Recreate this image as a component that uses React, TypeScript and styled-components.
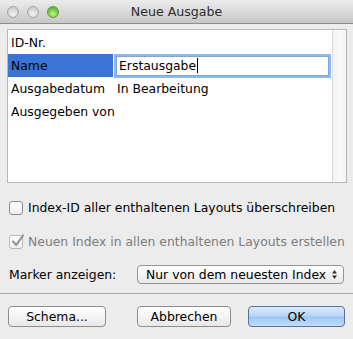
import React from "react";
import styled, { createGlobalStyle } from "styled-components";

const Global = createGlobalStyle`
  html, body { margin: 0; padding: 0; background: #ececec; }
  body { font-family: "DejaVu Sans", "Liberation Sans", sans-serif; font-size: 12.4px; color: #000; }
  * { box-sizing: border-box; }
`;

const Window = styled.div`
  width: 353px;
  height: 339px;
  background: #ececec;
  display: flex;
  flex-direction: column;
  overflow: hidden;
`;

const TitleBar = styled.div`
  height: 24px;
  flex: none;
  display: flex;
  align-items: center;
  position: relative;
  background: linear-gradient(#ebebeb, #d6d6d6 60%, #c6c6c6);
  border-bottom: 1px solid #8f8f8f;
`;

const Lights = styled.div`
  display: flex;
  gap: 8px;
  padding-left: 7px;
`;

const Light = styled.span<{ $green?: boolean }>`
  width: 12px;
  height: 12px;
  border-radius: 50%;
  border: 1px solid ${(p) => (p.$green ? "#5f9a3a" : "#a6a6a6")};
  background: ${(p) =>
    p.$green
      ? "radial-gradient(circle at 50% 70%, #c6f58a, #79c843 55%, #4c9a25)"
      : "radial-gradient(circle at 50% 70%, #f4f4f4, #d6d6d6 55%, #bcbcbc)"};
`;

const Title = styled.div`
  position: absolute;
  left: 0;
  right: 0;
  text-align: center;
  color: #2e2e2e;
  font-size: 12.6px;
  pointer-events: none;
`;

const Content = styled.div`
  flex: 1;
  display: flex;
  flex-direction: column;
  padding: 5px 6px 0 7px;
`;

const TableBox = styled.div`
  height: 154px;
  border: 1px solid #b8b8b8;
  background: #fff;
  display: flex;
`;

const Rows = styled.div`
  flex: 1;
  display: flex;
  flex-direction: column;
  padding-top: 1px;
`;

const Row = styled.div`
  height: 23px;
  display: flex;
  align-items: center;
`;

const Label = styled.div<{ $selected?: boolean }>`
  width: 105px;
  height: 100%;
  display: flex;
  align-items: center;
  padding-left: 3px;
  flex: none;
  background: ${(p) => (p.$selected ? "#3a74d5" : "transparent")};
  white-space: nowrap;
`;

const Value = styled.div`
  padding-left: 4px;
  white-space: nowrap;
`;

const Field = styled.div`
  margin-left: 3px;
  width: 213px;
  height: 20px;
  display: flex;
  align-items: center;
  padding-left: 2px;
  background: #fff;
  border: 1px solid #7ea6d6;
  box-shadow: 0 0 0 2px rgba(110, 160, 225, 0.75);
`;

const Caret = styled.span`
  display: inline-block;
  width: 1px;
  height: 15px;
  background: #000;
  margin-left: 1px;
`;

const Scroller = styled.div`
  width: 14px;
  flex: none;
  border-left: 1px solid #dedede;
  background: linear-gradient(90deg, #f1f1f1, #fafafa 50%, #f3f3f3);
`;

const Options = styled.div`
  display: flex;
  flex-direction: column;
  margin-top: 17px;
  gap: 19px;
`;

const CheckRow = styled.label<{ $disabled?: boolean }>`
  display: flex;
  align-items: center;
  gap: 5px;
  padding-left: 2px;
  color: ${(p) => (p.$disabled ? "#7d7d7d" : "#000")};
  white-space: nowrap;
`;

const Box = styled.span<{ $disabled?: boolean }>`
  width: 14px;
  height: 14px;
  border-radius: 3px;
  flex: none;
  position: relative;
  border: 1px solid ${(p) => (p.$disabled ? "#b9b9b9" : "#8c8c8c")};
  background: linear-gradient(#ffffff, #ededed);
`;

const Check = styled.svg`
  position: absolute;
  left: 0px;
  top: -3px;
`;

const PopupRow = styled.div`
  display: flex;
  align-items: center;
  margin-top: 16px;
  padding-left: 2px;
`;

const PopupLabel = styled.div`
  width: 128px;
  white-space: nowrap;
`;

const Popup = styled.div`
  width: 207px;
  height: 19px;
  border: 1px solid #959595;
  border-radius: 4px;
  background: linear-gradient(#ffffff, #f3f3f3 50%, #e9e9e9);
  display: flex;
  align-items: center;
  justify-content: space-between;
  padding: 0 5px 0 8px;
  white-space: nowrap;
`;

const Separator = styled.div`
  height: 1px;
  background: #a9a9a9;
  margin: 9px -6px 0 -7px;
`;

const ButtonRow = styled.div`
  display: flex;
  align-items: center;
  margin-top: 12px;
  padding-left: 1px;
`;

const Button = styled.button<{ $primary?: boolean; $w: number; $ml?: number }>`
  width: ${(p) => p.$w}px;
  margin-left: ${(p) => p.$ml ?? 0}px;
  height: 21px;
  padding: 0;
  font: inherit;
  color: #000;
  border-radius: 4px;
  border: 1px solid ${(p) => (p.$primary ? "#5b6e9e" : "#8e8e8e")};
  background: ${(p) =>
    p.$primary
      ? "linear-gradient(#dbeafb, #b8d6f6 45%, #9dc6f2 55%, #c2defa)"
      : "linear-gradient(#ffffff, #f4f4f4 50%, #e8e8e8)"};
`;

export default function App() {
  return (
    <>
      <Global />
      <Window>
        <TitleBar>
          <Lights>
            <Light />
            <Light />
            <Light $green />
          </Lights>
          <Title>Neue Ausgabe</Title>
        </TitleBar>
        <Content>
          <TableBox>
            <Rows>
              <Row>
                <Label>ID-Nr.</Label>
              </Row>
              <Row>
                <Label $selected>Name</Label>
                <Field>
                  Erstausgabe
                  <Caret />
                </Field>
              </Row>
              <Row>
                <Label>Ausgabedatum</Label>
                <Value>In Bearbeitung</Value>
              </Row>
              <Row>
                <Label>Ausgegeben von</Label>
              </Row>
            </Rows>
            <Scroller />
          </TableBox>
          <Options>
            <CheckRow>
              <Box />
              Index-ID aller enthaltenen Layouts überschreiben
            </CheckRow>
            <CheckRow $disabled>
              <Box $disabled>
                <Check width="16" height="16" viewBox="0 0 16 16">
                  <path d="M3 8.5 L6.2 12 L13 2.5" fill="none" stroke="#9a9a9a" strokeWidth="2.2" strokeLinecap="round" strokeLinejoin="round" />
                </Check>
              </Box>
              Neuen Index in allen enthaltenen Layouts erstellen
            </CheckRow>
          </Options>
          <PopupRow>
            <PopupLabel>Marker anzeigen:</PopupLabel>
            <Popup>
              <span>Nur von dem neuesten Index</span>
              <svg width="7" height="11" viewBox="0 0 7 11">
                <path d="M3.5 1 L6 4.5 L1 4.5 Z" fill="#333" />
                <path d="M3.5 10 L6 6.5 L1 6.5 Z" fill="#333" />
              </svg>
            </Popup>
          </PopupRow>
          <Separator />
          <ButtonRow>
            <Button $w={98}>Schema...</Button>
            <Button $w={94} $ml={31}>Abbrechen</Button>
            <Button $w={97} $ml={17} $primary>OK</Button>
          </ButtonRow>
        </Content>
      </Window>
    </>
  );
}
